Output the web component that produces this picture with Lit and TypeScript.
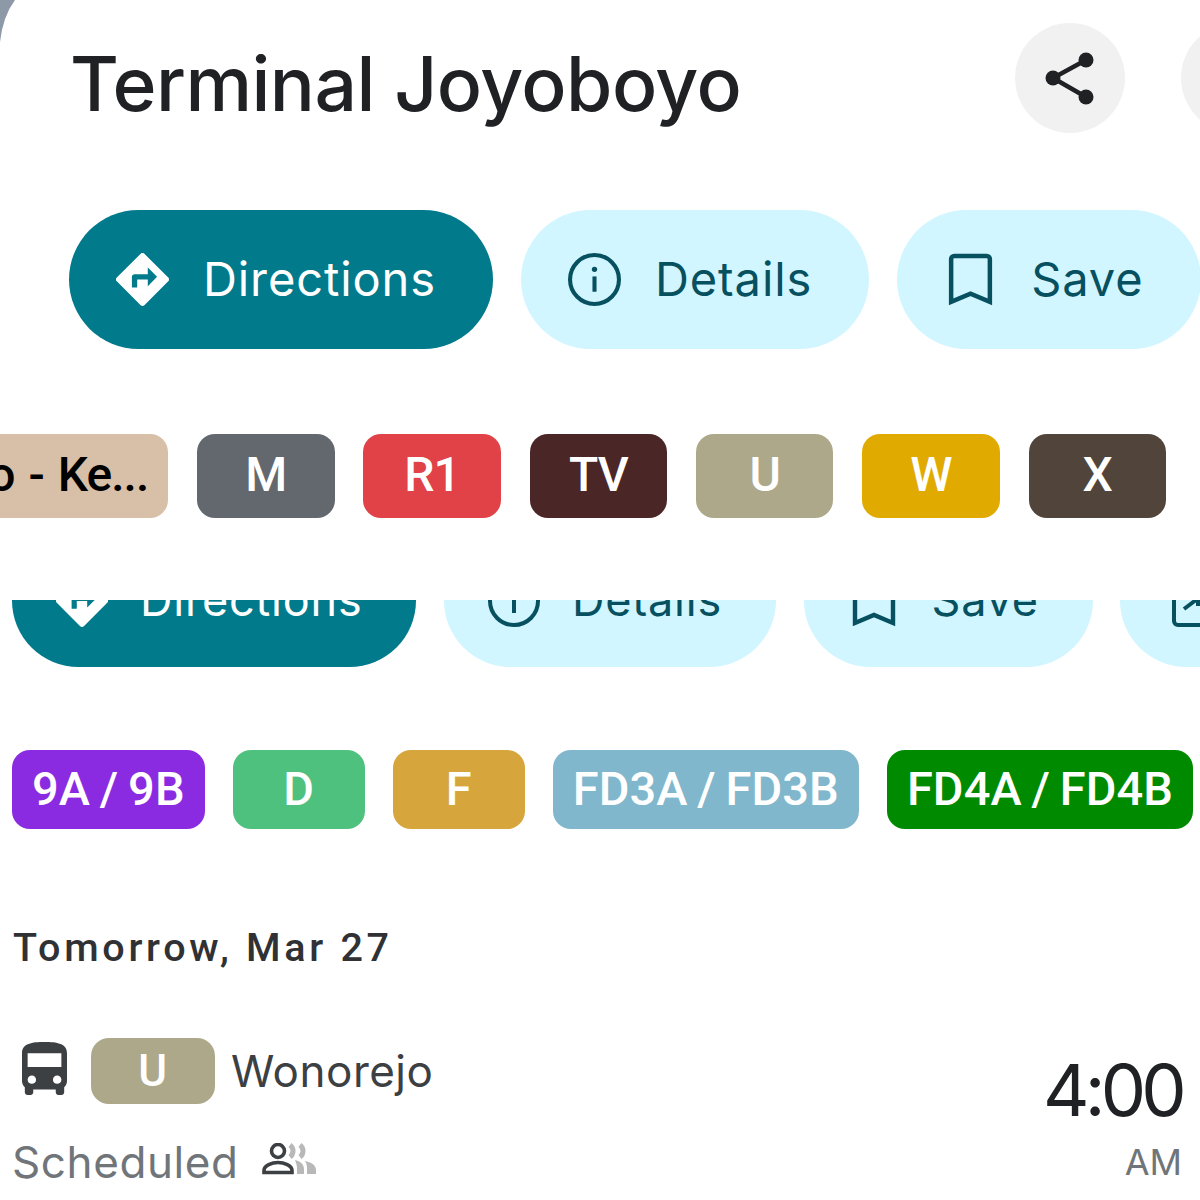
import { LitElement, html, css, svg } from 'lit';
import { customElement } from 'lit/decorators.js';

const directionsIcon = html`<svg class="icon" viewBox="2 2 20 20"><path fill="currentColor" fill-rule="evenodd" d="M21.71 11.29l-9-9a.996.996 0 0 0-1.41 0l-9 9a.996.996 0 0 0 0 1.41l9 9c.39.39 1.02.39 1.41 0l9-9a.996.996 0 0 0 0-1.41zM14 14.5V12h-4v3H8v-4c0-.55.45-1 1-1h5V7.5l3.5 3.5-3.5 3.5z"/></svg>`;

const infoIcon = html`<svg class="icon" viewBox="0 0 52 52"><circle cx="26" cy="26" r="24" fill="none" stroke="currentColor" stroke-width="4"/><rect x="24" y="23" width="4" height="15" fill="currentColor"/><circle cx="26" cy="16" r="2.6" fill="currentColor"/></svg>`;

const saveIcon = html`<svg class="icon" viewBox="0 0 52 52"><path fill="none" stroke="currentColor" stroke-width="4.4" d="M7 48V6a3 3 0 0 1 3-3h32a3 3 0 0 1 3 3v42L26 40z"/></svg>`;

const shareOutIcon = html`<svg class="icon" viewBox="0 0 52 52"><path fill="none" stroke="currentColor" stroke-width="4" d="M10 20v26a4 4 0 0 0 4 4h32M20 34l12-9M24 22h10v9"/></svg>`;

type Pill = { label: string; icon: unknown; primary?: boolean };

const topPills: Pill[] = [
  { label: 'Directions', icon: directionsIcon, primary: true },
  { label: 'Details', icon: infoIcon },
  { label: 'Save', icon: saveIcon },
];

const bottomPills: Pill[] = [
  ...topPills,
  { label: '', icon: shareOutIcon },
];

const topChips = [
  { label: 'Joyoboyo - Ke...', bg: '#d8bfa7', fg: '#000000' },
  { label: 'M', bg: '#63676e' },
  { label: 'R1', bg: '#e04248' },
  { label: 'TV', bg: '#4b2626' },
  { label: 'U', bg: '#aea88a' },
  { label: 'W', bg: '#e1aa00' },
  { label: 'X', bg: '#51453b' },
];

const bottomChips = [
  { label: '9A / 9B', bg: '#8a2be2' },
  { label: 'D', bg: '#4fc17f' },
  { label: 'F', bg: '#d6a53c' },
  { label: 'FD3A / FD3B', bg: '#80b7cc' },
  { label: 'FD4A / FD4B', bg: '#008a00' },
];

@customElement('app-root')
export class AppRoot extends LitElement {
  static styles = css`
    :host {
      display: block;
      width: 1200px;
      height: 1200px;
      overflow: hidden;
      background: #ffffff;
      font-family: Inter, Roboto, sans-serif;
    }

    .pane {
      position: relative;
      height: 600px;
      overflow: hidden;
    }

    .corner {
      position: absolute;
      left: 0;
      top: 0;
    }

    .header {
      display: flex;
      align-items: center;
      margin: 23px -91px 0 0;
      padding-left: 70px;
      gap: 56px;
    }

    .title {
      flex: 1;
      padding-top: 12px;
      font-size: 75px;
      font-weight: 450;
      line-height: 98px;
      letter-spacing: -0.55px;
      color: #202124;
    }

    .round {
      flex: none;
      display: flex;
      align-items: center;
      justify-content: center;
      width: 110px;
      height: 110px;
      border-radius: 50%;
      background: #f1f1f1;
    }

    .pills {
      display: flex;
      flex-wrap: nowrap;
    }

    .pill {
      flex: none;
      display: flex;
      align-items: center;
      border-radius: 70px;
      background: #d1f6ff;
      color: #06505f;
    }

    .pill span {
      margin-top: -3px;
    }

    .pill.primary {
      background: #017a8c;
      color: #ffffff;
    }

    .top-pills {
      margin-top: 77px;
      padding-left: 69px;
      gap: 28px;
    }

    .top-pills .pill {
      height: 139px;
      padding: 0 57px 0 47px;
      gap: 34px;
      font-size: 47px;
      letter-spacing: 0.9px;
    }

    .top-pills .icon {
      width: 53px;
      height: 53px;
    }

    .bottom-pills {
      margin-top: -66px;
      padding-left: 12px;
      gap: 27.5px;
    }

    .bottom-pills .pill {
      height: 133px;
      padding: 0 54px 0 44px;
      gap: 32px;
      font-size: 45px;
      letter-spacing: 0.8px;
    }

    .bottom-pills .icon {
      width: 52px;
      height: 52px;
    }

    .icon {
      flex: none;
      display: block;
    }

    .chips {
      display: flex;
      flex-wrap: nowrap;
    }

    .chip {
      flex: none;
      display: flex;
      align-items: center;
      justify-content: center;
      box-sizing: border-box;
      border-radius: 18px;
      color: #ffffff;
      white-space: nowrap;
      font-family: Roboto, sans-serif;
      font-weight: 500;
    }

    .top-chips {
      margin-top: 85px;
      justify-content: flex-end;
      padding-right: 34px;
      gap: 28.8px;
    }

    .top-chips .chip {
      width: 137.5px;
      height: 84px;
      padding-bottom: 3px;
      font-size: 48px;
      letter-spacing: -1px;
    }

    .top-chips .chip.long {
      width: 340px;
      justify-content: flex-end;
      padding-right: 20px;
      word-spacing: 3px;
    }

    .bottom-chips {
      margin-top: 83px;
      padding-left: 12px;
      gap: 28px;
    }

    .bottom-chips .chip {
      min-width: 132px;
      height: 79px;
      padding: 0 20px 2px;
      font-size: 47px;
      letter-spacing: 0.1px;
      word-spacing: -2px;
    }

    .date {
      margin: 99px 0 0 13px;
      font-family: Roboto, sans-serif;
      font-size: 39.5px;
      font-weight: 500;
      line-height: 40px;
      letter-spacing: 3.7px;
      color: #303134;
    }

    .trip {
      display: grid;
      grid-template-columns: 1fr auto;
      row-gap: 11px;
      margin-top: 70px;
      padding: 0 18px 0 12px;
    }

    .route {
      display: flex;
      align-items: flex-start;
      font-size: 44px;
      line-height: 66px;
      letter-spacing: 0.5px;
      color: #3c4043;
    }

    .bus {
      flex: none;
      width: 45px;
      height: 53px;
      margin: 4px 24px 0 10px;
    }

    .route .chip {
      width: 124px;
      height: 66px;
      margin-right: 16px;
      background: #aea88a;
      font-size: 44px;
    }

    .time {
      margin-top: 19px;
      font-size: 72px;
      line-height: 66px;
      letter-spacing: -4.8px;
      text-align: right;
      color: #202124;
    }

    .status {
      display: flex;
      align-items: center;
      gap: 23px;
      font-size: 44px;
      line-height: 56px;
      letter-spacing: 0.6px;
      color: #70757a;
    }

    .crowd {
      width: 54px;
      height: 32px;
      margin-top: -6px;
    }

    .period {
      font-size: 36px;
      line-height: 56px;
      text-align: right;
      color: #70757a;
    }
  `;

  private renderPill(p: Pill) {
    return html`
      <div class="pill ${p.primary ? 'primary' : ''}">
        ${p.icon}
        ${p.label ? html`<span>${p.label}</span>` : ''}
      </div>
    `;
  }

  render() {
    return html`
      <section class="pane">
        <svg class="corner" width="20" height="46" viewBox="0 0 20 46">
          <path fill="#8e99a8" d="M0 0H15Q3 16 0 42Z"/>
        </svg>

        <div class="header">
          <div class="title">Terminal Joyoboyo</div>
          <div class="round">
            <svg width="60" height="60" viewBox="0 0 60 60">
              ${svg`
                <path fill="none" stroke="#202124" stroke-width="4.5" d="M46 12L13 30l33 19"/>
                <circle cx="46" cy="12" r="7.5" fill="#202124"/>
                <circle cx="13" cy="30" r="7.5" fill="#202124"/>
                <circle cx="46" cy="49" r="7.5" fill="#202124"/>
              `}
            </svg>
          </div>
          <div class="round"></div>
        </div>

        <div class="pills top-pills">${topPills.map((p) => this.renderPill(p))}</div>

        <div class="chips top-chips">
          ${topChips.map(
            (c, i) => html`<div
              class="chip ${i === 0 ? 'long' : ''}"
              style="background:${c.bg};${c.fg ? `color:${c.fg}` : ''}"
            >${c.label}</div>`
          )}
        </div>
      </section>

      <section class="pane">
        <div class="pills bottom-pills">${bottomPills.map((p) => this.renderPill(p))}</div>

        <div class="chips bottom-chips">
          ${bottomChips.map((c) => html`<div class="chip" style="background:${c.bg}">${c.label}</div>`)}
        </div>

        <div class="date">Tomorrow, Mar 27</div>

        <div class="trip">
          <div class="route">
            <svg class="bus" viewBox="4 2 16 19" preserveAspectRatio="none">
              <path fill="#3c4043" d="M4 16c0 .88.39 1.67 1 2.22V20c0 .55.45 1 1 1h1c.55 0 1-.45 1-1v-1h8v1c0 .55.45 1 1 1h1c.55 0 1-.45 1-1v-1.78c.61-.55 1-1.34 1-2.22V6c0-3.5-3.58-4-8-4s-8 .5-8 4v10zm3.5 1c-.83 0-1.5-.67-1.5-1.5S6.67 14 7.5 14s1.5.67 1.5 1.5S8.33 17 7.5 17zm9 0c-.83 0-1.5-.67-1.5-1.5s.67-1.5 1.5-1.5 1.5.67 1.5 1.5-.67 1.5-1.5 1.5zm1.5-6H6V6h12v5z"/>
            </svg>
            <div class="chip">U</div>
            <span>Wonorejo</span>
          </div>
          <div class="time">4:00</div>
          <div class="status">
            <span>Scheduled</span>
            <svg class="crowd" viewBox="0 0 54 32">
              <path fill="none" stroke="#b8b8b8" stroke-width="5" d="M28 2c4 3 4 9 0 12M38 2c4 3 4 9 0 12"/>
              <path fill="#b8b8b8" d="M33 17c5 1 9 4 9 9v5h-7v-6c0-3-1-5-2-8zM43 18c6 1 11 4 11 9v4h-9v-6c0-3-.6-5-2-7z"/>
              <circle cx="16" cy="8" r="6.5" fill="none" stroke="#3c4043" stroke-width="3.6"/>
              <path fill="none" stroke="#3c4043" stroke-width="3.6" d="M2 29.5v-2c0-5 8-8 14-8s14 3 14 8v2z"/>
            </svg>
          </div>
          <div class="period">AM</div>
        </div>
      </section>
    `;
  }
}
